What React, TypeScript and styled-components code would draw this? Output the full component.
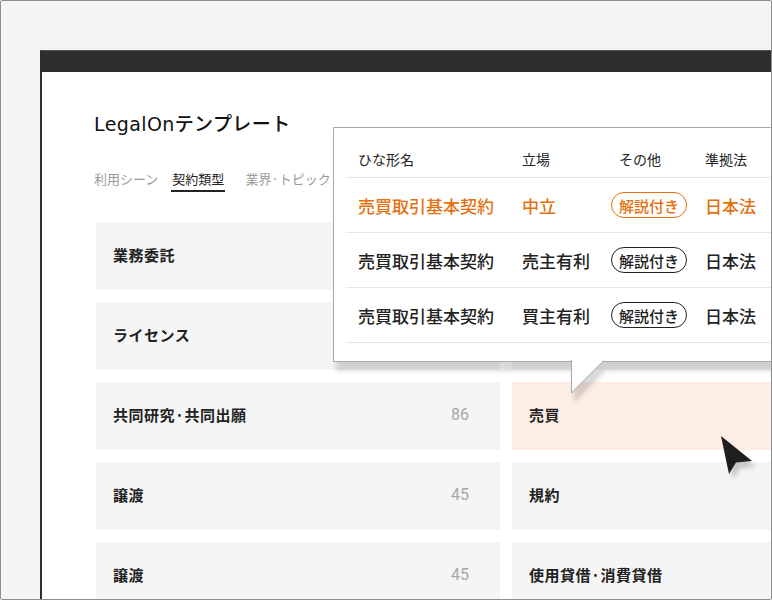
import styled, { createGlobalStyle } from 'styled-components';

const GlobalStyle = createGlobalStyle`
  html, body {
    margin: 0;
    padding: 0;
    overflow: hidden;
  }
  body {
    font-family: "Noto Sans CJK JP", "Noto Sans", sans-serif;
    color: #222;
  }
`;

const Page = styled.div`
  width: 772px;
  height: 600px;
  box-sizing: border-box;
  border: 1px solid #8e8e8e;
  border-radius: 2px;
  background: #f4f4f4;
  padding: 49px 0 0 39px;
  overflow: hidden;
`;

const Window = styled.div`
  position: relative;
  width: 780px;
  height: 600px;
  background: #fff;
  border-left: 2px solid #2e2e2e;
  border-top: 1px solid #555;
`;

const TopBar = styled.div`
  height: 21px;
  background: #2e2e2e;
`;

const Content = styled.div`
  padding: 38px 0 0 52px;
`;

const Title = styled.h1`
  margin: 0;
  font-family: "DejaVu Sans", "Noto Sans CJK JP", sans-serif;
  font-size: 19px;
  line-height: 28px;
  font-weight: 500;
  letter-spacing: 0.4px;
  color: #111;
`;

const Tabs = styled.nav`
  display: flex;
  gap: 12px;
  margin: 31px 0 0 -1px;
`;

const Tab = styled.span<{ $active?: boolean }>`
  font-size: 13px;
  line-height: 20px;
  padding: 0 1px 1px;
  color: ${({ $active }) => ($active ? '#222' : '#9a9a9a')};
  border-bottom: 2px solid ${({ $active }) => ($active ? '#222' : 'transparent')};

  &:last-child {
    margin-left: 7px;
  }
`;

const CardGrid = styled.div`
  display: grid;
  grid-template-columns: 404px 404px;
  grid-auto-rows: 68px;
  gap: 12px;
  margin: 30px 0 0 2px;
`;

const Card = styled.div<{ $active?: boolean }>`
  display: flex;
  align-items: center;
  justify-content: space-between;
  box-sizing: border-box;
  padding: 0 31px 3px 17px;
  background: ${({ $active }) => ($active ? '#fdeee5' : '#f5f5f5')};
`;

const CardLabel = styled.span`
  font-size: 15px;
  font-weight: 600;
  letter-spacing: 0.5px;
  color: #222;
`;

const CardCount = styled.span`
  font-family: Roboto, "Liberation Sans", sans-serif;
  font-size: 16px;
  color: #a8a8a8;
`;

const Popup = styled.div`
  position: absolute;
  left: 291px;
  top: 76px;
  width: 520px;
  box-sizing: border-box;
  background: #fff;
  border: 1px solid #a9a9a9;
  padding: 13px 0 18px 12px;
  filter: drop-shadow(3px 9px 2px rgba(0, 0, 0, 0.15));
`;

const Row = styled.div<{ $head?: boolean }>`
  display: grid;
  grid-template-columns: 164px 89px 94px 1fr;
  align-items: center;
  height: ${({ $head }) => ($head ? '36px' : '54px')};
  padding-left: 12px;
  border-bottom: 1px solid #e6e6e6;
`;

const HeadCell = styled.span<{ $indent?: number }>`
  font-size: 14px;
  color: #222;
  padding-left: ${({ $indent }) => $indent ?? 0}px;
`;

const Cell = styled.span<{ $accent?: boolean }>`
  font-size: 17px;
  font-weight: 500;
  white-space: nowrap;
  color: ${({ $accent }) => ($accent ? '#e5700f' : '#222')};
`;

const Pill = styled.span<{ $accent?: boolean }>`
  justify-self: start;
  display: inline-flex;
  align-items: center;
  height: 26px;
  box-sizing: border-box;
  padding: 0 7px;
  border-radius: 13px;
  border: 1px solid ${({ $accent }) => ($accent ? '#e5700f' : '#222')};
  color: ${({ $accent }) => ($accent ? '#e5700f' : '#222')};
  font-size: 15px;
  font-weight: 500;
  white-space: nowrap;
`;

const Tail = styled.svg`
  position: absolute;
  left: 237px;
  top: 100%;
  overflow: visible;
`;

const Cursor = styled.svg`
  position: absolute;
  left: 678px;
  top: 384px;
  filter: drop-shadow(4px 6px 2px rgba(0, 0, 0, 0.18));
`;

// count is left out where the popup or the window edge hides it
type CardData = { label?: string; count?: number; active?: boolean };

const cards: CardData[] = [
  { label: '業務委託' },
  {},
  { label: 'ライセンス' },
  {},
  { label: '共同研究·共同出願', count: 86 },
  { label: '売買', active: true },
  { label: '譲渡', count: 45 },
  { label: '規約' },
  { label: '譲渡', count: 45 },
  { label: '使用貸借·消費貸借' },
];

const rows = [
  { name: '売買取引基本契約', side: '中立', law: '日本法', accent: true },
  { name: '売買取引基本契約', side: '売主有利', law: '日本法' },
  { name: '売買取引基本契約', side: '買主有利', law: '日本法' },
];

export default function App() {
  return (
    <Page>
      <GlobalStyle />
      <Window>
        <TopBar />
        <Content>
          <Title>LegalOnテンプレート</Title>
          <Tabs>
            <Tab>利用シーン</Tab>
            <Tab $active>契約類型</Tab>
            <Tab>業界·トピック</Tab>
          </Tabs>
          <CardGrid>
            {cards.map((c, i) => (
              <Card key={i} $active={c.active}>
                {c.label && <CardLabel>{c.label}</CardLabel>}
                {c.count !== undefined && <CardCount>{c.count}</CardCount>}
              </Card>
            ))}
          </CardGrid>
        </Content>

        <Popup>
          <Row $head>
            <HeadCell>ひな形名</HeadCell>
            <HeadCell>立場</HeadCell>
            <HeadCell $indent={8}>その他</HeadCell>
            <HeadCell>準拠法</HeadCell>
          </Row>
          {rows.map((r, i) => (
            <Row key={i}>
              <Cell $accent={r.accent}>{r.name}</Cell>
              <Cell $accent={r.accent}>{r.side}</Cell>
              <Pill $accent={r.accent}>解説付き</Pill>
              <Cell $accent={r.accent}>{r.law}</Cell>
            </Row>
          ))}
          <Tail width="34" height="33" viewBox="0 0 34 33">
            <polygon points="0,-1 0,32 33,-1" fill="#fff" />
            <path d="M0.5 -1 V32 L33 -0.5" fill="none" stroke="#a9a9a9" strokeWidth="1" />
          </Tail>
        </Popup>

        <Cursor width="36" height="42" viewBox="0 0 36 42">
          <path d="M1 1 L32 26 L16 27.5 L9 39 Z" fill="#1e1e1e" />
        </Cursor>
      </Window>
    </Page>
  );
}
